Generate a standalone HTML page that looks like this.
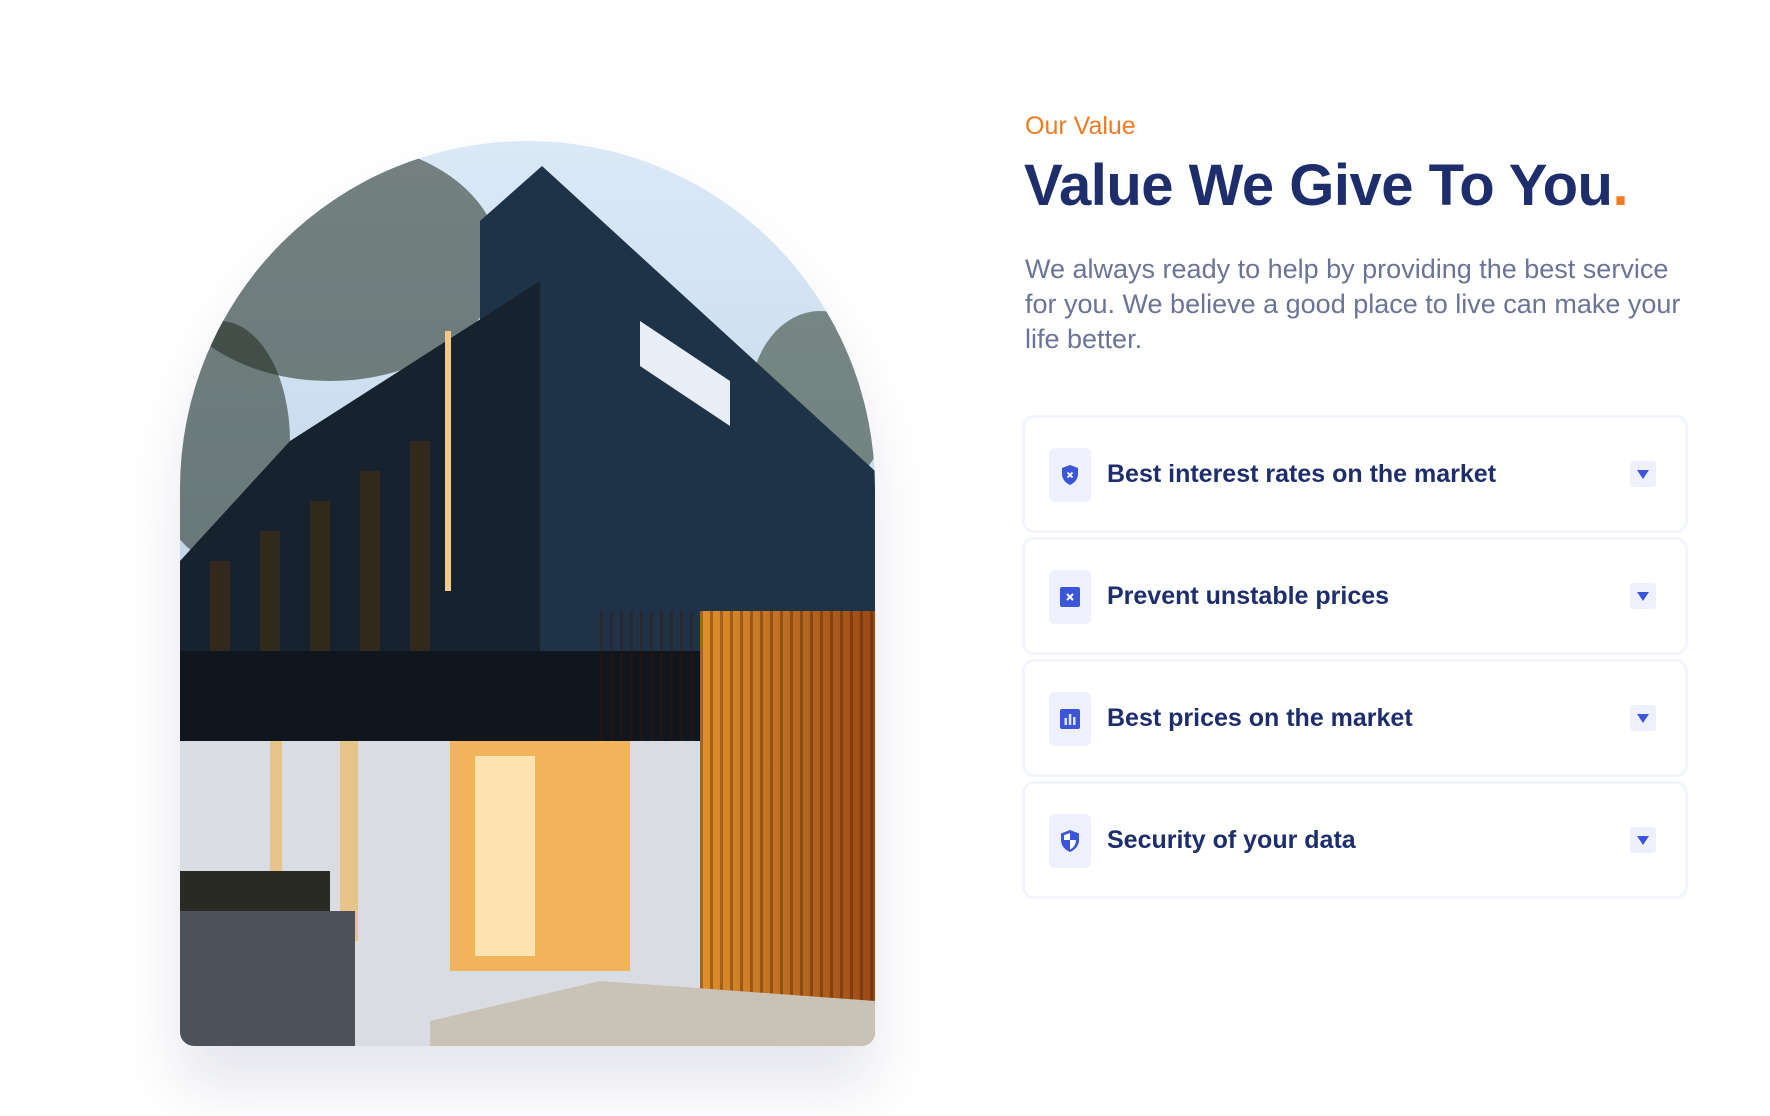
<!DOCTYPE html>
<html><head><meta charset="utf-8"><style>
*{margin:0;padding:0;box-sizing:border-box}
body{width:1770px;height:1116px;background:#fff;font-family:"Liberation Sans",sans-serif;position:relative;overflow:hidden}
.arch{position:absolute;left:180px;top:141px;width:695px;height:905px;border-radius:348px 348px 14px 14px;overflow:hidden;box-shadow:0 40px 60px rgba(40,50,110,.12)}
.arch svg{display:block}
.eyebrow{position:absolute;left:1025px;top:112px;font-size:25px;color:#f07a20}
h1{position:absolute;left:1024px;top:152px;font-size:58px;font-weight:700;color:#1e2d6b;letter-spacing:-.5px}
h1 span{color:#f07a20}
p{position:absolute;left:1025px;top:252px;width:680px;font-size:27px;line-height:35px;color:#6b7497}
.card{position:absolute;left:1022px;width:666px;height:118px;border:3px solid #f2f5fd;border-radius:12px;background:#fff}
.ib{position:absolute;left:24px;top:30px;width:42px;height:54px;background:#eef1fd;border-radius:6px;display:flex;align-items:center;justify-content:center}
.t{position:absolute;left:82px;top:0;line-height:112px;font-size:25px;font-weight:700;color:#1e2d6b}
.ar{position:absolute;left:605px;top:43px;width:26px;height:26px;background:#eef1fd;border-radius:3px}
.ar:after{content:"";position:absolute;left:7px;top:9px;border-left:6px solid transparent;border-right:6px solid transparent;border-top:9px solid #3b56d9}
</style></head><body>
<div class="arch"><svg width="695" height="905" viewBox="0 0 695 905">
<defs><linearGradient id="sky" x1="0" y1="0" x2="0" y2="1"><stop offset="0" stop-color="#dbe9f7"/><stop offset="1" stop-color="#a9c4dc"/></linearGradient>
<linearGradient id="wood" x1="0" y1="0" x2="1" y2="0"><stop offset="0" stop-color="#e0902a"/><stop offset="1" stop-color="#9a4a14"/></linearGradient>
<pattern id="sl" width="10" height="10" patternUnits="userSpaceOnUse"><rect x="0" width="3" height="10" fill="rgba(60,20,0,.35)"/></pattern></defs>
<rect width="695" height="905" fill="url(#sky)"/>
<ellipse cx="150" cy="120" rx="170" ry="120" fill="#1f2a1e" opacity=".55"/>
<ellipse cx="40" cy="300" rx="70" ry="120" fill="#1f2a1e" opacity=".55"/>
<ellipse cx="640" cy="260" rx="70" ry="90" fill="#2b3a28" opacity=".55"/>
<polygon points="362,25 695,330 695,600 300,600 300,80" fill="#1f3348"/>
<polygon points="110,300 360,140 360,600 0,600 0,420" fill="#16222e"/>
<g fill="#3a2a18" opacity=".8"><rect x="30" y="420" width="20" height="170"/><rect x="80" y="390" width="20" height="200"/><rect x="130" y="360" width="20" height="230"/><rect x="180" y="330" width="20" height="260"/><rect x="230" y="300" width="20" height="290"/></g>
<rect x="265" y="190" width="6" height="260" fill="#f3c98a"/>
<polygon points="460,180 550,240 550,285 460,225" fill="#e8eef5"/>
<rect x="0" y="510" width="695" height="100" fill="#0f161e"/>
<polygon points="520,470 695,470 695,905 520,905" fill="url(#wood)"/>
<rect x="420" y="470" width="275" height="435" fill="url(#sl)"/>
<rect x="0" y="600" width="520" height="305" fill="#d9dde3"/>
<rect x="270" y="600" width="180" height="230" fill="#f2b45a"/>
<rect x="295" y="615" width="60" height="200" fill="#fde3b0"/>
<rect x="160" y="600" width="18" height="200" fill="#e6c48a"/>
<rect x="90" y="600" width="12" height="150" fill="#e6c48a"/>
<rect x="0" y="770" width="175" height="135" fill="#4d525a"/>
<rect x="0" y="730" width="150" height="40" fill="#2a2a24"/>
<polygon points="250,880 420,840 695,860 695,905 250,905" fill="#c9c2b6"/>
</svg></div>
<div class="eyebrow">Our Value</div>
<h1>Value We Give To You<span>.</span></h1>
<p>We always ready to help by providing the best service for you. We believe a good place to live can make your life better.</p>

<div class="card" style="top:415px"><div class="ib"><svg width="20" height="22" viewBox="0 0 20 22"><path d="M10 1L2 4v6c0 5 3.5 9 8 11 4.5-2 8-6 8-11V4z" fill="#3b56d9"/><path d="M7.5 8.5l5 5M12.5 8.5l-5 5" stroke="#fff" stroke-width="1.8"/></svg></div><div class="t">Best interest rates on the market</div><div class="ar"></div></div>
<div class="card" style="top:537px"><div class="ib"><svg width="20" height="20" viewBox="0 0 20 20"><rect width="20" height="20" rx="2" fill="#3b56d9"/><path d="M7 7l6 6M13 7l-6 6" stroke="#fff" stroke-width="2"/></svg></div><div class="t">Prevent unstable prices</div><div class="ar"></div></div>
<div class="card" style="top:659px"><div class="ib"><svg width="20" height="20" viewBox="0 0 20 20"><rect width="20" height="20" rx="2" fill="#3b56d9"/><rect x="4.5" y="9" width="2.5" height="7" fill="#dfe5ff"/><rect x="8.8" y="5" width="2.5" height="11" fill="#dfe5ff"/><rect x="13" y="8" width="2.5" height="8" fill="#dfe5ff"/></svg></div><div class="t">Best prices on the market</div><div class="ar"></div></div>
<div class="card" style="top:781px"><div class="ib"><svg width="22" height="24" viewBox="0 0 22 24"><path d="M11 1L2 4.5v6.5c0 5.5 4 10 9 12 5-2 9-6.5 9-12V4.5z" fill="#3b56d9"/><path d="M11 4L5 6.3V11h6zM11 11v9.5c3.3-1.6 6-5 6-9.5z" fill="#fff"/></svg></div><div class="t">Security of your data</div><div class="ar"></div></div>
</body></html>
